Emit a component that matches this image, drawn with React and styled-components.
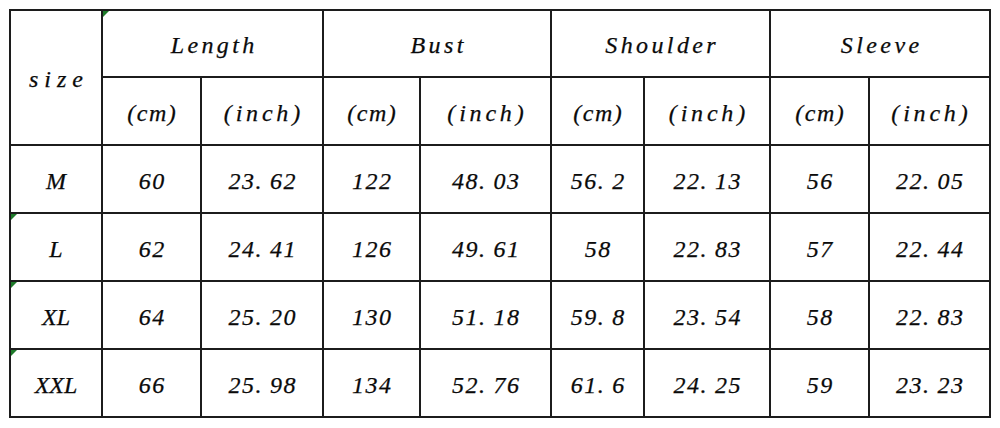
import React from 'react'
import styled, { createGlobalStyle } from 'styled-components'

const GlobalStyle = createGlobalStyle`
  html, body {
    margin: 0;
    padding: 0;
    background: #fff;
  }
  body {
    font-family: "Liberation Serif", "Times New Roman", serif;
    color: #0a0a0a;
  }
`

const Page = styled.div`
  width: 1000px;
  height: 428px;
  padding: 9px;
  box-sizing: border-box;
`

const Table = styled.div`
  display: grid;
  grid-template-columns: 90px 97px 120px 95px 129px 91px 124px 97px 119px;
  grid-template-rows: 65px 66px 66px 66px 66px 66px;
  gap: 2px;
  padding: 2px;
  background: #1c1c1c;
  width: max-content;
`

const Cell = styled.div`
  position: relative;
  background: #fff;
  display: flex;
  align-items: center;
  justify-content: center;
  padding-top: 4px;
  padding-left: ${p => p.$spacing ?? 1.5}px;
  box-sizing: border-box;
  font-style: italic;
  font-size: 24px;
  letter-spacing: ${p => p.$spacing ?? 1.5}px;
  -webkit-text-stroke: 0.25px #0a0a0a;
  white-space: nowrap;
  grid-column: ${p => p.$col || 'auto'};
  grid-row: ${p => p.$row || 'auto'};

  ${p =>
    p.$marked &&
    `
      &::before {
        content: '';
        position: absolute;
        top: 0;
        left: 0;
        border-top: 6px solid #1e7a2a;
        border-right: 6px solid transparent;
      }
    `}
`

// the source font sets the decimal point in a full digit-wide slot
const Dot = styled.span`
  margin-right: 7px;
`

const groups = ['Length', 'Bust', 'Shoulder', 'Sleeve']

const rows = [
  { size: 'M', values: ['60', '23.62', '122', '48.03', '56.2', '22.13', '56', '22.05'] },
  { size: 'L', values: ['62', '24.41', '126', '49.61', '58', '22.83', '57', '22.44'], marked: true },
  { size: 'XL', values: ['64', '25.20', '130', '51.18', '59.8', '23.54', '58', '22.83'], marked: true },
  { size: 'XXL', values: ['66', '25.98', '134', '52.76', '61.6', '24.25', '59', '23.23'], marked: true },
]

const Value = ({ text }) => {
  const [whole, frac] = text.split('.')
  if (frac === undefined) return text
  return (
    <>
      {whole}
      <Dot>.</Dot>
      {frac}
    </>
  )
}

const App = () => {
  return (
    <Page>
      <GlobalStyle />
      <Table>
        <Cell $row="1 / span 2" $col="1" $spacing={6}>
          size
        </Cell>
        {groups.map((name, i) => (
          <Cell key={name} $col={`${2 + i * 2} / span 2`} $spacing={3.4} $marked={i === 0}>
            {name}
          </Cell>
        ))}
        {groups.map(name => (
          <React.Fragment key={name + '-units'}>
            <Cell $spacing={1.5}>(cm)</Cell>
            <Cell $spacing={3.8}>(inch)</Cell>
          </React.Fragment>
        ))}
        {rows.map(row => (
          <React.Fragment key={row.size}>
            <Cell $spacing={0} $marked={row.marked}>
              {row.size}
            </Cell>
            {row.values.map((v, i) => (
              <Cell key={i}>
                <Value text={v} />
              </Cell>
            ))}
          </React.Fragment>
        ))}
      </Table>
    </Page>
  )
}

export default App
